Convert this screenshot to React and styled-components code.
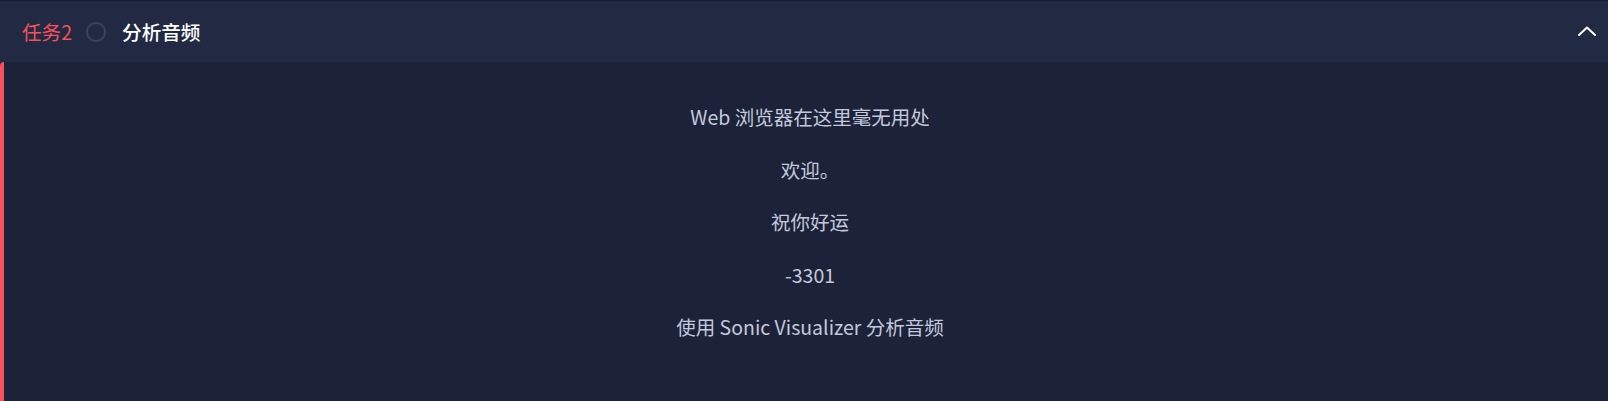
import React from 'react';
import styled, { createGlobalStyle } from 'styled-components';

const GlobalStyle = createGlobalStyle`
  html, body {
    margin: 0;
    padding: 0;
    background: #1c2338;
  }
  body {
    font-family: "Noto Sans CJK SC", "Noto Sans", sans-serif;
  }
`;

const Panel = styled.section`
  width: 1608px;
  height: 401px;
  background: #1c2338;
  border-top: 1px solid #141a28;
  box-sizing: border-box;
  display: flex;
  flex-direction: column;
`;

const Header = styled.div`
  height: 61px;
  background: #212a42;
  display: flex;
  align-items: center;
  padding: 0 22px;
  gap: 14px;
  flex-shrink: 0;
`;

const TaskTag = styled.span`
  color: #f4515c;
  font-size: 19.6px;
`;

const Status = styled.span`
  width: 16px;
  height: 16px;
  border: 2px solid #3b4457;
  border-radius: 50%;
  margin-right: 2px;
`;

const Title = styled.h3`
  margin: 0;
  color: #ffffff;
  font-size: 19.6px;
  font-weight: 500;
  flex: 1;
`;

const Toggle = styled.button`
  background: none;
  border: 0;
  padding: 0;
  margin-right: -12px;
  display: flex;
  color: #ffffff;
  cursor: pointer;
`;

const Body = styled.div`
  flex: 1;
  border-left: 4px solid #f4535e;
  border-top-left-radius: 4px;
  display: flex;
  flex-direction: column;
  align-items: center;
  gap: 28.5px;
  padding: 43px 0 0 8px;
`;

const Line = styled.p`
  margin: 0;
  color: #c3c9dc;
  font-size: 19.5px;
  line-height: 24px;
`;

const lines = [
  'Web 浏览器在这里毫无用处',
  '欢迎。',
  '祝你好运',
  '-3301',
  '使用 Sonic Visualizer 分析音频',
];

const App = () => (
  <>
    <GlobalStyle />
    <Panel>
      <Header>
        <TaskTag>任务2</TaskTag>
        <Status />
        <Title>分析音频</Title>
        <Toggle aria-label="collapse">
          <svg width="22" height="22" viewBox="0 0 22 22" fill="none">
            <path d="M3 14 L11 6.5 L19 14" stroke="currentColor" strokeWidth="2" strokeLinecap="round" strokeLinejoin="round" />
          </svg>
        </Toggle>
      </Header>
      <Body>
        {lines.map((text, i) => (
          <Line key={i}>{text}</Line>
        ))}
      </Body>
    </Panel>
  </>
);

export default App;
